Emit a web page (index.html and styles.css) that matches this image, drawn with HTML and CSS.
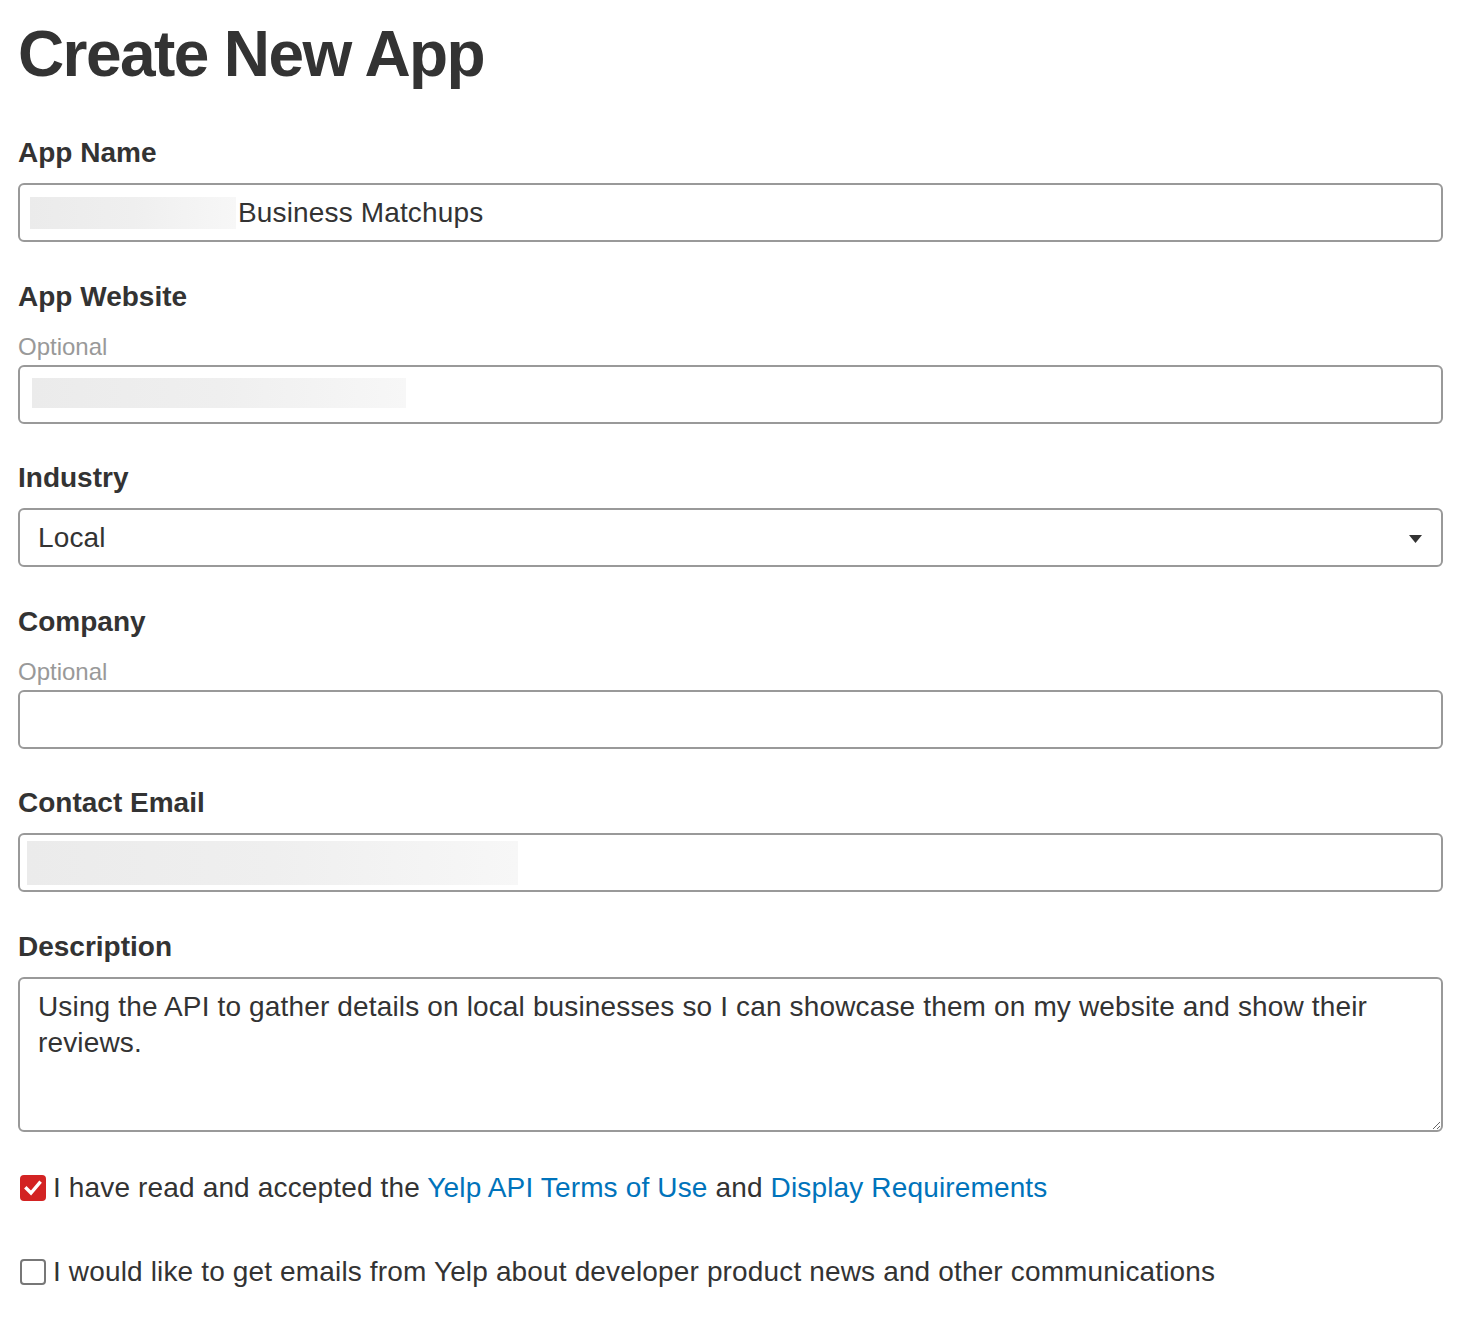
FILE: index.html
```html
<!DOCTYPE html>
<html lang="en">
<head>
<meta charset="utf-8">
<title>Create New App</title>
<link rel="stylesheet" href="styles.css">
</head>
<body>
<main class="page">
  <h1 class="title">Create New App</h1>

  <div class="field">
    <label class="label">App Name</label>
    <div class="box"><span class="redact redact-name"></span>Business Matchups</div>
  </div>

  <div class="field">
    <label class="label">App Website</label>
    <div class="hint">Optional</div>
    <div class="box"><span class="redact redact-site"></span></div>
  </div>

  <div class="field">
    <label class="label">Industry</label>
    <div class="box select">
      <span>Local</span>
      <svg class="caret" width="13" height="8" viewBox="0 0 13 8"><path d="M0 0H13L6.5 8Z" fill="#333"/></svg>
    </div>
  </div>

  <div class="field">
    <label class="label">Company</label>
    <div class="hint">Optional</div>
    <div class="box"></div>
  </div>

  <div class="field">
    <label class="label">Contact Email</label>
    <div class="box"><span class="redact redact-email"></span></div>
  </div>

  <div class="field">
    <label class="label">Description</label>
    <textarea class="area" readonly>Using the API to gather details on local businesses so I can showcase them on my website and show their reviews.</textarea>
  </div>

  <div class="check-row">
    <span class="checkbox checked">
      <svg width="18" height="16" viewBox="0 0 18 16"><path d="M2.5 8.5L7 13L15.5 3" fill="none" stroke="#fff" stroke-width="3.4" stroke-linecap="square"/></svg>
    </span>
    <span>I have read and accepted the <a class="link" href="#">Yelp API Terms of Use</a> and <a class="link" href="#">Display Requirements</a></span>
  </div>

  <div class="check-row second">
    <span class="checkbox"></span>
    <span>I would like to get emails from Yelp about developer product news and other communications</span>
  </div>
</main>
</body>
</html>
```

FILE: styles.css
```css
html, body {
  margin: 0;
  background: #fff;
}

body {
  font-family: "Liberation Sans", Arial, Helvetica, sans-serif;
  color: #333;
}

.page {
  width: 1425px;
  margin-left: 18px;
  padding-top: 18px;
}

.title {
  font-size: 64px;
  line-height: 72px;
  font-weight: bold;
  letter-spacing: -1.6px;
  margin: 0 0 45px;
}

.field {
  display: flex;
  flex-direction: column;
  margin-bottom: 36.5px;
}

.label {
  font-size: 28px;
  line-height: 36px;
  font-weight: bold;
  margin-bottom: 12px;
}

.hint {
  font-size: 24px;
  line-height: 28px;
  color: #999;
  margin: 6px 0 4px;
}

.box {
  box-sizing: border-box;
  height: 59px;
  border: 2px solid #999;
  border-radius: 6px;
  padding: 0 18px;
  display: flex;
  align-items: center;
  font-size: 28px;
  letter-spacing: 0.15px;
  color: #333;
  white-space: nowrap;
}

.redact {
  display: inline-block;
  flex: none;
  background: linear-gradient(90deg, #ebebeb 0%, #efefef 50%, #f7f7f7 100%);
}

.redact-name {
  width: 206px;
  height: 32px;
  margin-left: -8px;
  margin-right: 2px;
}

.redact-site {
  width: 374px;
  height: 30px;
  margin-left: -6px;
  margin-top: -3px;
}

.redact-email {
  width: 491px;
  height: 44px;
  margin-left: -11px;
}

.select {
  justify-content: space-between;
  padding-right: 19px;
}

.caret {
  display: block;
  margin-top: 2px;
}

.area {
  box-sizing: border-box;
  width: 100%;
  height: 155px;
  border: 2px solid #999;
  border-radius: 6px;
  padding: 10px 18px;
  font-family: "Liberation Sans", Arial, Helvetica, sans-serif;
  font-size: 28px;
  line-height: 36px;
  letter-spacing: 0.15px;
  color: #333;
  resize: vertical;
  outline: none;
  margin: 0;
  display: block;
}

.check-row {
  display: flex;
  align-items: center;
  gap: 7px;
  font-size: 28px;
  line-height: 36px;
  letter-spacing: 0.15px;
  margin-left: 2px;
}

.field + .check-row {
  margin-top: 38px;
}

.check-row.second {
  margin-top: 48px;
}

.checkbox {
  box-sizing: border-box;
  flex: none;
  width: 26px;
  height: 26px;
  border: 2px solid #777;
  border-radius: 4px;
  background: #fff;
  display: flex;
  align-items: center;
  justify-content: center;
}

.checkbox.checked {
  border: none;
  background: #d32323;
}

.link {
  color: #0073bb;
  text-decoration: none;
}
```
